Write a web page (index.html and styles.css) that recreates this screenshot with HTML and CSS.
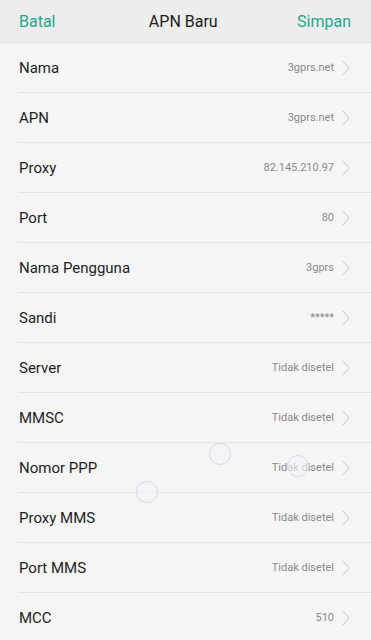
FILE: index.html
```html
<!DOCTYPE html>
<html lang="id">
<head>
    <meta charset="UTF-8">
    <meta name="viewport" content="width=device-width, initial-scale=1.0">
    <title>APN Baru</title>
    <link rel="stylesheet" href="styles.css">
</head>
<body>
    <div class="header">
        <span class="action">Batal</span>
        <span class="title">APN Baru</span>
        <span class="action">Simpan</span>
    </div>
    <div class="list">
        <div class="row"><span class="label">Nama</span><span class="value">3gprs.net</span><svg class="chev" viewBox="0 0 8 16"><path d="M1 1 L7 8 L1 15"/></svg></div>
        <div class="row"><span class="label">APN</span><span class="value">3gprs.net</span><svg class="chev" viewBox="0 0 8 16"><path d="M1 1 L7 8 L1 15"/></svg></div>
        <div class="row"><span class="label">Proxy</span><span class="value">82.145.210.97</span><svg class="chev" viewBox="0 0 8 16"><path d="M1 1 L7 8 L1 15"/></svg></div>
        <div class="row"><span class="label">Port</span><span class="value">80</span><svg class="chev" viewBox="0 0 8 16"><path d="M1 1 L7 8 L1 15"/></svg></div>
        <div class="row"><span class="label">Nama Pengguna</span><span class="value">3gprs</span><svg class="chev" viewBox="0 0 8 16"><path d="M1 1 L7 8 L1 15"/></svg></div>
        <div class="row"><span class="label">Sandi</span><span class="value">*****</span><svg class="chev" viewBox="0 0 8 16"><path d="M1 1 L7 8 L1 15"/></svg></div>
        <div class="row"><span class="label">Server</span><span class="value">Tidak disetel</span><svg class="chev" viewBox="0 0 8 16"><path d="M1 1 L7 8 L1 15"/></svg></div>
        <div class="row"><span class="label">MMSC</span><span class="value">Tidak disetel</span><svg class="chev" viewBox="0 0 8 16"><path d="M1 1 L7 8 L1 15"/></svg></div>
        <div class="row"><span class="label">Nomor PPP</span><span class="value">Tidak disetel</span><svg class="chev" viewBox="0 0 8 16"><path d="M1 1 L7 8 L1 15"/></svg></div>
        <div class="row"><span class="label">Proxy MMS</span><span class="value">Tidak disetel</span><svg class="chev" viewBox="0 0 8 16"><path d="M1 1 L7 8 L1 15"/></svg></div>
        <div class="row"><span class="label">Port MMS</span><span class="value">Tidak disetel</span><svg class="chev" viewBox="0 0 8 16"><path d="M1 1 L7 8 L1 15"/></svg></div>
        <div class="row"><span class="label">MCC</span><span class="value">510</span><svg class="chev" viewBox="0 0 8 16"><path d="M1 1 L7 8 L1 15"/></svg></div>
    </div>
    <!-- touch indicators -->
    <div class="touch" style="left: 209px; top: 443px;"></div>
    <div class="touch" style="left: 287px; top: 455px;"></div>
    <div class="touch" style="left: 136px; top: 481px;"></div>
</body>
</html>
```

FILE: styles.css
```css
body {
    margin: 0;
    background: #f5f5f5;
    font-family: Roboto, "Noto Sans", sans-serif;
    overflow: hidden;
}
.header {
    height: 42px;
    background: #ededed;
    border-bottom: 1px solid #e2e2e2;
    display: flex;
    align-items: center;
    justify-content: space-between;
    padding: 0 20px 0 19px;
}
.title {
    font-size: 16px;
    color: #1c1c1c;
    padding-left: 14px;
}
.action {
    font-size: 16px;
    color: #22a88e;
}
.list {
    padding-left: 18px;
}
.row {
    height: 49px;
    border-bottom: 1px solid #e4e4e4;
    display: flex;
    align-items: center;
    padding-right: 21px;
}
.label {
    flex: 1;
    font-size: 15px;
    color: #1e1e1e;
    padding-left: 1px;
}
.value {
    font-size: 11px;
    color: #8a8a8a;
    margin-right: 8px;
}
.chev {
    width: 8px;
    height: 16px;
    fill: none;
    stroke: #c2c2c2;
    stroke-width: 0.9;
}
.touch {
    position: absolute;
    width: 20px;
    height: 20px;
    border-radius: 50%;
    border: 1px solid #d6d8ea;
    background: rgba(245, 245, 248, 0.6);
}
```
